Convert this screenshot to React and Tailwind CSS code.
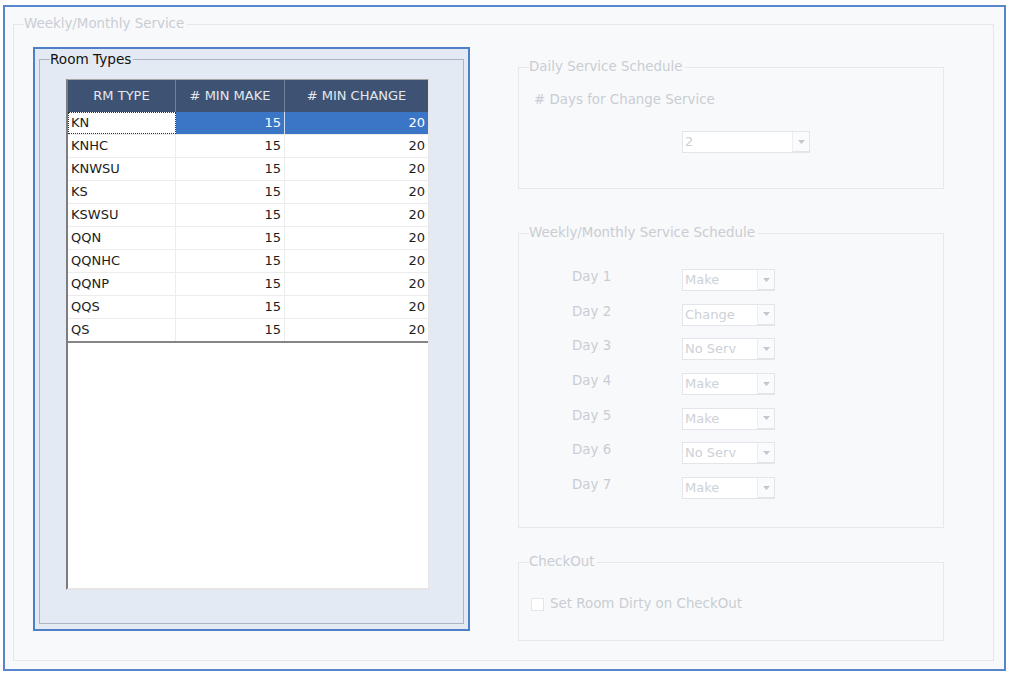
import React from "react";

const rows = ["KN", "KNHC", "KNWSU", "KS", "KSWSU", "QQN", "QQNHC", "QQNP", "QQS", "QS"];
const days = [
  ["Day 1", "Make"],
  ["Day 2", "Change"],
  ["Day 3", "No Serv"],
  ["Day 4", "Make"],
  ["Day 5", "Make"],
  ["Day 6", "No Serv"],
  ["Day 7", "Make"],
];

function Combo({ value, w }) {
  return (
    <div className={`flex h-[22px] ${w} border border-[#e2e5e9] bg-white`}>
      <div className="flex-1 pl-[2px] text-[13px] leading-[20px] text-[#cdd1d6]">{value}</div>
      <div className="flex w-[17px] items-center justify-center border-l border-b border-l-[#eceef1] border-b-[#e2e4e8] bg-[#fafbfc]">
        <svg width="7" height="4" viewBox="0 0 7 4">
          <path d="M0 0 L7 0 L3.5 4 Z" fill="#c4c7cc" />
        </svg>
      </div>
    </div>
  );
}

export default function App() {
  return (
    <div className="h-[675px] w-[1011px] bg-white pl-[3px] pt-[5px] font-['DejaVu_Sans',Verdana,sans-serif]">
      <div className="h-[666px] w-[1003px] border-2 border-[#5686cb] bg-[#f8f9fb] pl-[8px] pt-[9px]">
        <fieldset className="h-[645px] w-[981px] border border-[#e4e7eb]">
          <legend className="ml-[10px] pr-[3px] text-[13.4px] leading-[16px] text-[#c9cdd3]">Weekly/Monthly Service</legend>
          <div className="flex pl-[19px]">
            {/* Left panel */}
            <div className="mt-[15px] h-[584px] w-[437px] border-2 border-[#4f7fc6] bg-[#e4eaf3] pl-[4px] pr-[4px] pt-[2px]">
              <fieldset className="h-[573px] w-[425px] border border-[#aab5c5]">
                <legend className="ml-[10px] pr-[2px] text-[13.6px] leading-[16px] text-[#111]">Room Types</legend>
                <div className="ml-[26px] mt-[12px] h-[511px] w-[363px] border-l-2 border-t border-r border-b-2 border-l-[#7d7d7d] border-t-[#a5a5a5] border-r-[#e6e6e6] border-b-[#e6e6e6] bg-white">
                  <div className="flex h-[32px] bg-[#3e5373] text-[13px] text-[#e3e8ef]">
                    <div className="flex w-[108px] items-center justify-center border-r border-[#71819b]">RM TYPE</div>
                    <div className="flex w-[109px] items-center justify-center border-r border-[#71819b]">
                      # MIN MAKE
                    </div>
                    <div className="flex flex-1 items-center justify-center">
                      # MIN CHANGE
                    </div>
                  </div>
                  {rows.map((r, i) => {
                    const sel = i === 0;
                    const last = i === rows.length - 1;
                    return (
                      <div
                        key={r}
                        className={`flex h-[23px] text-[13px] leading-[22px] text-[#1c1c1c] ${
                          last ? "h-[24px] border-b-2 border-[#858585]" : "border-b border-[#ececec]"
                        }`}
                      >
                        <div
                          className={`w-[108px] border-r border-[#ececec] pl-[3px] ${
                            sel ? "outline-1 outline-dotted outline-[#333] -outline-offset-1" : ""
                          }`}
                        >
                          {r}
                        </div>
                        <div
                          className={`w-[109px] border-r pr-[3px] text-right ${
                            sel ? "border-[#cfe0f5] bg-[#3b76c6] text-white" : "border-[#ececec]"
                          }`}
                        >
                          15
                        </div>
                        <div className={`flex-1 pr-[3px] text-right ${sel ? "bg-[#3b76c6] text-white" : ""}`}>20</div>
                      </div>
                    );
                  })}
                </div>
              </fieldset>
            </div>

            {/* Right column */}
            <div className="ml-[48px] flex w-[426px] flex-col">
              <fieldset className="mt-[27px] h-[130px] border border-[#e6e8ec]">
                <legend className="ml-[10px] pr-[3px] text-[13.4px] leading-[16px] text-[#c9cdd3]">
                  Daily Service Schedule
                </legend>
                <div className="ml-[15px] mt-[17px] text-[13.4px] leading-[16px] text-[#c9cdd3]"># Days for Change Service</div>
                <div className="ml-[163px] mt-[23px]">
                  <Combo value="2" w="w-[128px]" />
                </div>
              </fieldset>

              <fieldset className="mt-[36px] h-[303px] border border-[#e6e8ec]">
                <legend className="ml-[10px] pr-[3px] text-[13.4px] leading-[16px] text-[#c9cdd3]">
                  Weekly/Monthly Service Schedule
                </legend>
                <div className="ml-[53px] mt-[28px] flex flex-col">
                  {days.map(([d, v]) => (
                    <div key={d} className="flex h-[34.7px] items-start">
                      <div className="w-[110px] text-[13.4px] leading-[16px] text-[#c9cdd3]">{d}</div>
                      <Combo value={v} w="w-[93px]" />
                    </div>
                  ))}
                </div>
              </fieldset>

              <fieldset className="mt-[26px] h-[87px] border border-[#e6e8ec]">
                <legend className="ml-[10px] pr-[3px] text-[13.4px] leading-[16px] text-[#c9cdd3]">CheckOut</legend>
                <div className="ml-[12px] mt-[26px] flex items-center gap-[6px]">
                  <div className="h-[13px] w-[13px] border border-[#e3e5e9] bg-white" />
                  <div className="text-[13.4px] leading-[16px] text-[#c9cdd3]">Set Room Dirty on CheckOut</div>
                </div>
              </fieldset>
            </div>
          </div>
        </fieldset>
      </div>
    </div>
  );
}
